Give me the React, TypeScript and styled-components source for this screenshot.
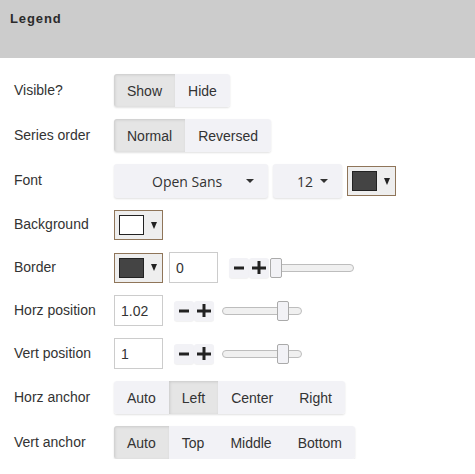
import styled, { createGlobalStyle } from 'styled-components';

const GlobalStyle = createGlobalStyle`
	body {
		margin: 0;
		background: #fff;
		font-family: 'Liberation Sans', Arial, sans-serif;
		color: #333;
	}
`;

const Header = styled.div`
	height: 58px;
	background: #cccccc;
	box-sizing: border-box;
	padding: 11px 0 0 10px;
	h2 {
		margin: 0;
		font-size: 13px;
		line-height: 16px;
		font-weight: bold;
		letter-spacing: 0.9px;
		color: #2b2b2b;
	}
`;

const Body = styled.div`
	display: flex;
	flex-direction: column;
	gap: 12px;
	padding: 16px 0 0 14px;
`;

const Row = styled.div`
	display: flex;
	align-items: center;
`;

const Label = styled.div`
	width: 100px;
	flex: none;
	font-size: 14px;
	color: #333;
	margin-top: -2px;
`;

const Group = styled.div`
	display: flex;
	height: 33px;
	border-radius: 3px;
	box-shadow: 0 1px 2px rgba(0, 0, 0, 0.12);
	overflow: hidden;
`;

const ToggleButton = styled.button<{ $active?: boolean }>`
	border: none;
	margin: 0;
	padding: 0 13px;
	font-family: 'Liberation Sans', Arial, sans-serif;
	font-size: 14px;
	color: #333;
	cursor: pointer;
	background: ${(p) => (p.$active ? '#e5e5e5' : '#f2f2f6')};
	box-shadow: ${(p) => (p.$active ? 'inset 1px 1px 3px rgba(0,0,0,0.12)' : 'none')};
`;

const Dropdown = styled.button<{ $width: number; $left: number }>`
	display: flex;
	align-items: center;
	justify-content: space-between;
	width: ${(p) => p.$width}px;
	height: 34px;
	border: none;
	border-radius: 3px;
	background: #f2f2f6;
	box-shadow: 0 1px 2px rgba(0, 0, 0, 0.12);
	padding: 0 14px 0 ${(p) => p.$left}px;
	margin-right: 5px;
	font-family: 'Open Sans', sans-serif;
	font-size: 14px;
	color: #333;
	cursor: pointer;
`;

const Caret = styled.span`
	width: 0;
	height: 0;
	border-left: 4px solid transparent;
	border-right: 4px solid transparent;
	border-top: 4px solid #333;
`;

const ColorPicker = styled.div`
	display: flex;
	align-items: center;
	box-sizing: border-box;
	width: 49px;
	height: 30px;
	border: 1px solid #8f7559;
	background: #eeeeee;
	padding-left: 4px;
	cursor: pointer;
`;

const Swatch = styled.div<{ $color: string }>`
	box-sizing: border-box;
	width: 25px;
	height: 20px;
	border: 1px solid #222;
	background: ${(p) => p.$color};
`;

const PickerArrow = styled.span`
	margin-left: 7px;
	width: 0;
	height: 0;
	border-left: 3px solid transparent;
	border-right: 3px solid transparent;
	border-top: 7px solid #222;
`;

const NumberInput = styled.input`
	box-sizing: border-box;
	width: 49px;
	height: 31px;
	border: 1px solid #ccc;
	padding: 0 6px;
	font-family: 'Liberation Sans', Arial, sans-serif;
	font-size: 14px;
	color: #333;
	outline: none;
`;

const Steppers = styled.div`
	display: flex;
	margin-left: 11px;
`;

const StepButton = styled.button`
	display: flex;
	align-items: center;
	justify-content: center;
	width: 20px;
	height: 20px;
	padding: 0;
	border: none;
	border-radius: 3px;
	background: #f2f2f6;
	box-shadow: 0 1px 1px rgba(0, 0, 0, 0.06);
	cursor: pointer;
`;

const Slider = styled.div<{ $width: number; $gap: number }>`
	position: relative;
	width: ${(p) => p.$width}px;
	height: 20px;
	margin-left: ${(p) => p.$gap}px;
	display: flex;
	align-items: center;
`;

const Track = styled.div`
	box-sizing: border-box;
	width: 100%;
	height: 8px;
	border: 1px solid #bdbdbd;
	border-radius: 4px;
	background: #f0f0f0;
`;

const Thumb = styled.div`
	position: absolute;
	top: 0;
	box-sizing: border-box;
	width: 12px;
	height: 20px;
	border: 1px solid #aaa;
	border-radius: 2px;
	background: #f2f2f6;
`;

const Spacer = styled.div<{ $w: number }>`
	width: ${(p) => p.$w}px;
	flex: none;
`;

const Minus = () => (
	<svg width='12' height='12' viewBox='0 0 12 12'>
		<rect x='1' y='4.5' width='10' height='3' fill='#222' />
	</svg>
);

const Plus = () => (
	<svg width='14' height='14' viewBox='0 0 14 14'>
		<rect x='0' y='5.5' width='14' height='3' fill='#222' />
		<rect x='5.5' y='0' width='3' height='13' fill='#222' />
	</svg>
);

const Stepper = () => (
	<Steppers>
		<StepButton>
			<Minus />
		</StepButton>
		<StepButton>
			<Plus />
		</StepButton>
	</Steppers>
);

const RangeSlider = ({ width, gap, pos }: { width: number; gap: number; pos: number }) => (
	<Slider $width={width} $gap={gap}>
		<Track />
		<Thumb style={{ left: pos }} />
	</Slider>
);

const Toggle = ({ options, active }: { options: string[]; active: string }) => (
	<Group>
		{options.map((o) => (
			<ToggleButton key={o} $active={o === active}>
				{o}
			</ToggleButton>
		))}
	</Group>
);

const App = () => {
	return (
		<>
			<GlobalStyle />
			<Header>
				<h2>Legend</h2>
			</Header>
			<Body>
				<Row>
					<Label>Visible?</Label>
					<Toggle options={['Show', 'Hide']} active='Show' />
				</Row>
				<Row>
					<Label>Series order</Label>
					<Toggle options={['Normal', 'Reversed']} active='Normal' />
				</Row>
				<Row>
					<Label>Font</Label>
					<Dropdown $width={154} $left={38}>
						<span>Open Sans</span>
						<Caret />
					</Dropdown>
					<Dropdown $width={69} $left={24}>
						<span>12</span>
						<Caret />
					</Dropdown>
					<ColorPicker>
						<Swatch $color='#444444' />
						<PickerArrow />
					</ColorPicker>
				</Row>
				<Row>
					<Label>Background</Label>
					<ColorPicker>
						<Swatch $color='#ffffff' />
						<PickerArrow />
					</ColorPicker>
				</Row>
				<Row>
					<Label>Border</Label>
					<ColorPicker>
						<Swatch $color='#444444' />
						<PickerArrow />
					</ColorPicker>
					<Spacer $w={6} />
					<NumberInput defaultValue='0' />
					<Stepper />
					<RangeSlider width={84} gap={1} pos={0} />
				</Row>
				<Row>
					<Label>Horz position</Label>
					<NumberInput defaultValue='1.02' />
					<Stepper />
					<RangeSlider width={80} gap={8} pos={55} />
				</Row>
				<Row>
					<Label>Vert position</Label>
					<NumberInput defaultValue='1' />
					<Stepper />
					<RangeSlider width={80} gap={8} pos={55} />
				</Row>
				<Row>
					<Label>Horz anchor</Label>
					<Toggle options={['Auto', 'Left', 'Center', 'Right']} active='Left' />
				</Row>
				<Row>
					<Label>Vert anchor</Label>
					<Toggle options={['Auto', 'Top', 'Middle', 'Bottom']} active='Auto' />
				</Row>
			</Body>
		</>
	);
};

export default App;
